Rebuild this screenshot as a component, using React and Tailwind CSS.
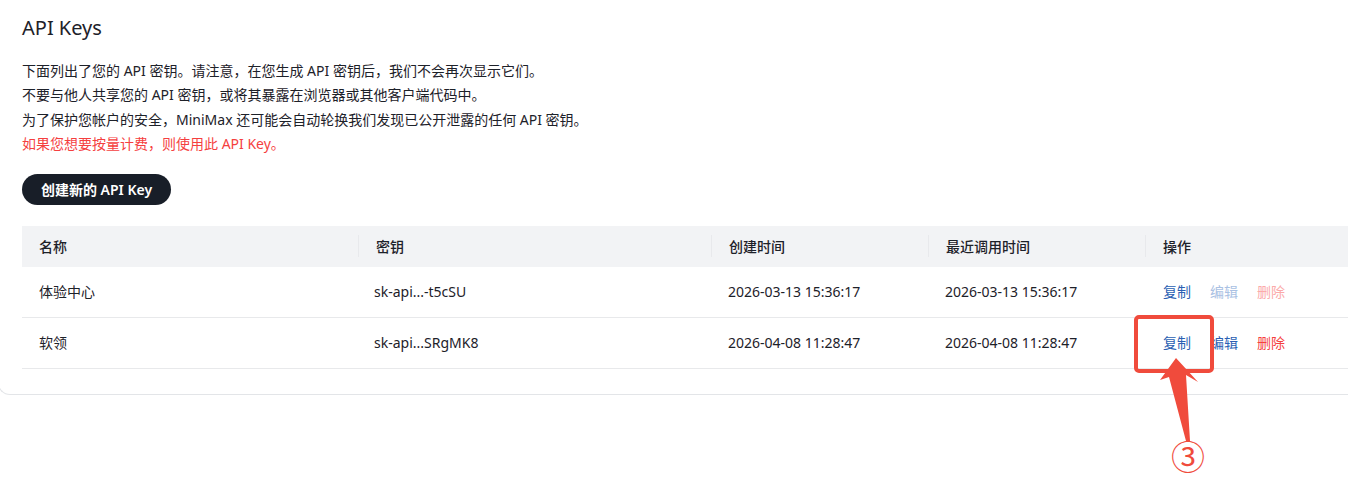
const rows = [
    { name: "体验中心", key: "sk-api...-t5cSU", created: "2026-03-13 15:36:17", used: "2026-03-13 15:36:17", disabled: true },
    { name: "软领", key: "sk-api...SRgMK8", created: "2026-04-08 11:28:47", used: "2026-04-08 11:28:47", disabled: false },
];

const font = { fontFamily: '"Noto Sans", "Noto Sans CJK SC", sans-serif' };

const App = () => {
    return (
        <div className="relative h-[487px] w-[1348px] overflow-hidden bg-white text-[#1d2129]" style={font}>
            <div className="ml-[-2px] rounded-bl-[12px] border-b border-l border-[#e3e5e8] pb-[25px] pl-[23px] pt-[14px]">
                <h1 className="text-[20px] leading-[28px]">API Keys</h1>

                <div className="mt-[17px] text-[14px] leading-[24.4px]">
                    <p>下面列出了您的 API 密钥。请注意，在您生成 API 密钥后，我们不会再次显示它们。</p>
                    <p>不要与他人共享您的 API 密钥，或将其暴露在浏览器或其他客户端代码中。</p>
                    <p>为了保护您帐户的安全，MiniMax 还可能会自动轮换我们发现已公开泄露的任何 API 密钥。</p>
                    <p className="text-[#f53f3f]">如果您想要按量计费，则使用此 API Key。</p>
                </div>

                <button className="mt-[17px] block h-[31px] w-[149px] rounded-full bg-[#181e28] text-[14px] font-semibold text-white">
                    创建新的 API Key
                </button>

                <div className="mt-[21px] text-[14px]">
                    {/* header */}
                    <div className="grid h-[41px] grid-cols-[336px_353px_217px_217px_1fr] items-center bg-[#f2f3f5] font-medium">
                        {["名称", "密钥", "创建时间", "最近调用时间", "操作"].map((h, i) => (
                            <div key={h} className={`flex h-[22px] items-center px-[17px] ${i > 0 ? "border-l border-[#e8e9ec]" : ""}`}>
                                {h}
                            </div>
                        ))}
                    </div>

                    {rows.map((r) => (
                        <div
                            key={r.name}
                            className="grid h-[51px] grid-cols-[336px_353px_217px_217px_1fr] items-center border-b border-[#e8e9eb]"
                        >
                            <div className="px-[17px]">{r.name}</div>
                            <div className="px-[16px]">{r.key}</div>
                            <div className="px-[17px]">{r.created}</div>
                            <div className="px-[17px]">{r.used}</div>
                            <div className="flex gap-[19px] px-[18px]">
                                <span className="text-[#2b5fb3]">复制</span>
                                <span className={r.disabled ? "text-[#aac1e3]" : "text-[#2b5fb3]"}>编辑</span>
                                <span className={r.disabled ? "text-[#fbaaaa]" : "text-[#f53f3f]"}>删除</span>
                            </div>
                        </div>
                    ))}
                </div>
            </div>

            {/* annotation */}
            <div className="absolute left-[1134px] top-[315px] h-[58px] w-[80px] rounded-[5px] border-[4px] border-[#f04b3c]" />
            <svg className="absolute left-0 top-0" width="1348" height="487" viewBox="0 0 1348 487">
                <polygon
                    points="1176,358 1198,382 1186,375 1190,441 1186,441 1169,377 1160,380"
                    fill="#f04b3c"
                />
            </svg>
            <div className="absolute left-[1171px] top-[437px] text-[34px] leading-[40px] text-[#f04b3c]" style={font}>
                ③
            </div>
        </div>
    );
};

export default App;
